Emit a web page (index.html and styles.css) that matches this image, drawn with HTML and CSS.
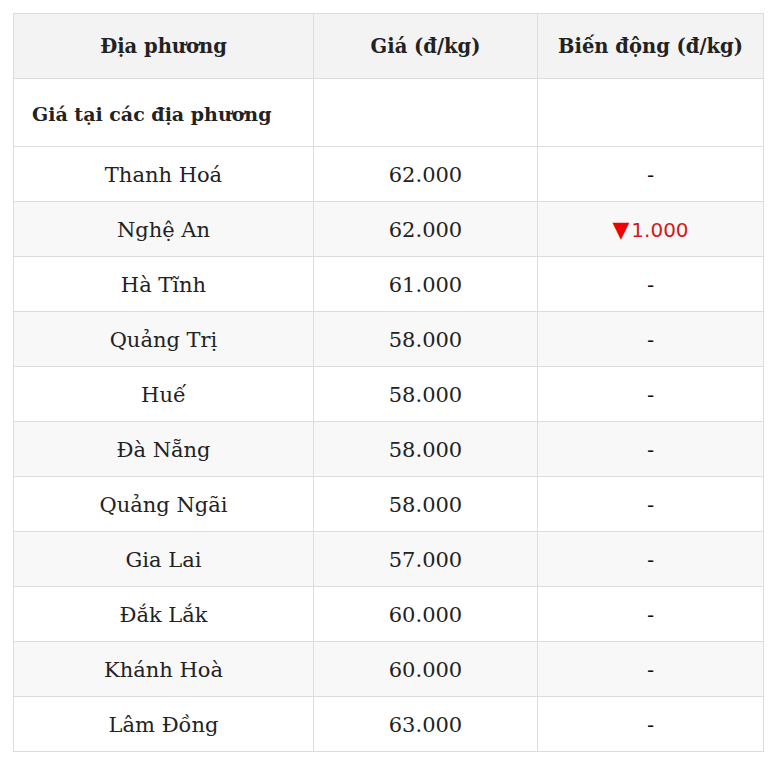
FILE: index.html
```html
<!DOCTYPE html>
<html lang="vi">
<head>
<meta charset="utf-8">
<link rel="stylesheet" href="styles.css">
</head>
<body>
<table class="price-table">
  <colgroup>
    <col class="c1"><col class="c2"><col class="c3">
  </colgroup>
  <thead>
    <tr class="head-row">
      <th>Địa phương</th>
      <th>Giá (đ/kg)</th>
      <th>Biến động (đ/kg)</th>
    </tr>
  </thead>
  <tbody>
    <tr class="section-row">
      <td class="section-title">Giá tại các địa phương</td>
      <td></td>
      <td></td>
    </tr>
    <tr><td>Thanh Hoá</td><td>62.000</td><td class="chg">-</td></tr>
    <tr class="alt"><td>Nghệ An</td><td>62.000</td><td class="chg down"><span class="tri">▼</span>1.000</td></tr>
    <tr><td>Hà Tĩnh</td><td>61.000</td><td class="chg">-</td></tr>
    <tr class="alt"><td>Quảng Trị</td><td>58.000</td><td class="chg">-</td></tr>
    <tr><td>Huế</td><td>58.000</td><td class="chg">-</td></tr>
    <tr class="alt"><td>Đà Nẵng</td><td>58.000</td><td class="chg">-</td></tr>
    <tr><td>Quảng Ngãi</td><td>58.000</td><td class="chg">-</td></tr>
    <tr class="alt"><td>Gia Lai</td><td>57.000</td><td class="chg">-</td></tr>
    <tr><td>Đắk Lắk</td><td>60.000</td><td class="chg">-</td></tr>
    <tr class="alt"><td>Khánh Hoà</td><td>60.000</td><td class="chg">-</td></tr>
    <tr><td>Lâm Đồng</td><td>63.000</td><td class="chg">-</td></tr>
  </tbody>
</table>
</body>
</html>
```
FILE: styles.css
```css
html, body {
  margin: 0;
  padding: 0;
  background: #ffffff;
}
body {
  padding: 13px;
  font-family: "DejaVu Serif", "Liberation Serif", serif;
  color: #222222;
}
.price-table {
  width: 750px;
  border-collapse: collapse;
  table-layout: fixed;
}
.c1 { width: 300px; }
.c2 { width: 224px; }
.c3 { width: 226px; }
.price-table th,
.price-table td {
  border: 1px solid #dddddd;
  text-align: center;
  vertical-align: middle;
  padding: 2px 8px 0;
  font-size: 21px;
  line-height: 24px;
}
.head-row th {
  height: 62px;
  background: #f3f3f3;
  font-weight: 700;
  font-size: 19.5px;
  color: #222222;
}
.section-row td {
  height: 65px;
}
.price-table .section-title {
  text-align: left;
  padding-left: 18px;
  font-weight: 700;
  font-size: 19px;
}
tbody tr td {
  height: 52px;
}
tbody tr.alt td {
  background: #f8f8f8;
}
.price-table .chg {
  font-family: "DejaVu Sans", "Liberation Sans", sans-serif;
  font-size: 20px;
  color: #111111;
}
.price-table .down {
  color: #d3191c;
}
.tri {
  color: #f00000;
  font-size: 22px;
  margin-right: 2px;
}
```
